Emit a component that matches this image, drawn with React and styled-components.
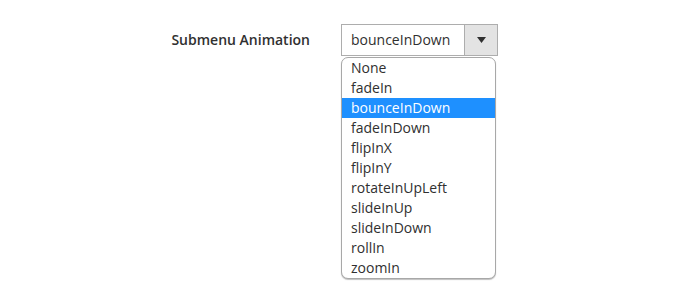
import styled, { createGlobalStyle } from 'styled-components';

const GlobalStyle = createGlobalStyle`
	html, body {
		margin: 0;
		padding: 0;
		background: #fff;
	}
	body {
		font-family: "Open Sans", "Liberation Sans", sans-serif;
		color: #303030;
	}
`;

const options = [
	'None',
	'fadeIn',
	'bounceInDown',
	'fadeInDown',
	'flipInX',
	'flipInY',
	'rotateInUpLeft',
	'slideInUp',
	'slideInDown',
	'rollIn',
	'zoomIn',
];

const App = () => {
	const selected = 'bounceInDown';
	return (
		<Page>
			<GlobalStyle />
			<FieldRow>
				<Label>Submenu Animation</Label>
				<Control>
					<Select>
						<SelectValue>{selected}</SelectValue>
						<ArrowButton>
							<svg width="9" height="6" viewBox="0 0 9 6">
								<path d="M0 0h9L4.5 6z" fill="#303030" />
							</svg>
						</ArrowButton>
					</Select>
					<OptionList>
						{options.map((o) => (
							<Option key={o} $active={o === selected}>{o}</Option>
						))}
					</OptionList>
				</Control>
			</FieldRow>
		</Page>
	);
};

export default App;

const Page = styled.div`
	width: 685px;
	height: 296px;
	padding-top: 24px;
	box-sizing: border-box;
`;

const FieldRow = styled.div`
	display: flex;
	align-items: flex-start;
	gap: 31px;
`;

const Label = styled.div`
	width: 310px;
	text-align: right;
	font-size: 14px;
	font-weight: 600;
	line-height: 32px;
	color: #303030;
`;

const Control = styled.div`
	position: relative;
	width: 157px;
`;

const Select = styled.div`
	display: flex;
	height: 32px;
	box-sizing: border-box;
	border: 1px solid #adadad;
	background: #fff;
`;

const SelectValue = styled.div`
	flex: 1;
	padding-left: 9px;
	font-size: 14px;
	line-height: 30px;
	color: #303030;
`;

const ArrowButton = styled.div`
	width: 32px;
	display: flex;
	align-items: center;
	justify-content: center;
	background: #e3e3e3;
	border-left: 1px solid #adadad;
`;

const OptionList = styled.ul`
	position: absolute;
	top: 33px;
	left: 0;
	width: 153px;
	margin: 0;
	padding: 0;
	list-style: none;
	background: #fff;
	border: 1px solid #a8a8a8;
	border-radius: 7px;
	overflow: hidden;
	box-shadow: 0 1px 1px rgba(0, 0, 0, 0.25);
`;

const Option = styled.li`
	height: 20px;
	padding-left: 9px;
	font-size: 14px;
	line-height: 19px;
	color: ${(p) => (p.$active ? '#fff' : '#303030')};
	background: ${(p) => (p.$active ? '#1e90ff' : 'transparent')};
`;
